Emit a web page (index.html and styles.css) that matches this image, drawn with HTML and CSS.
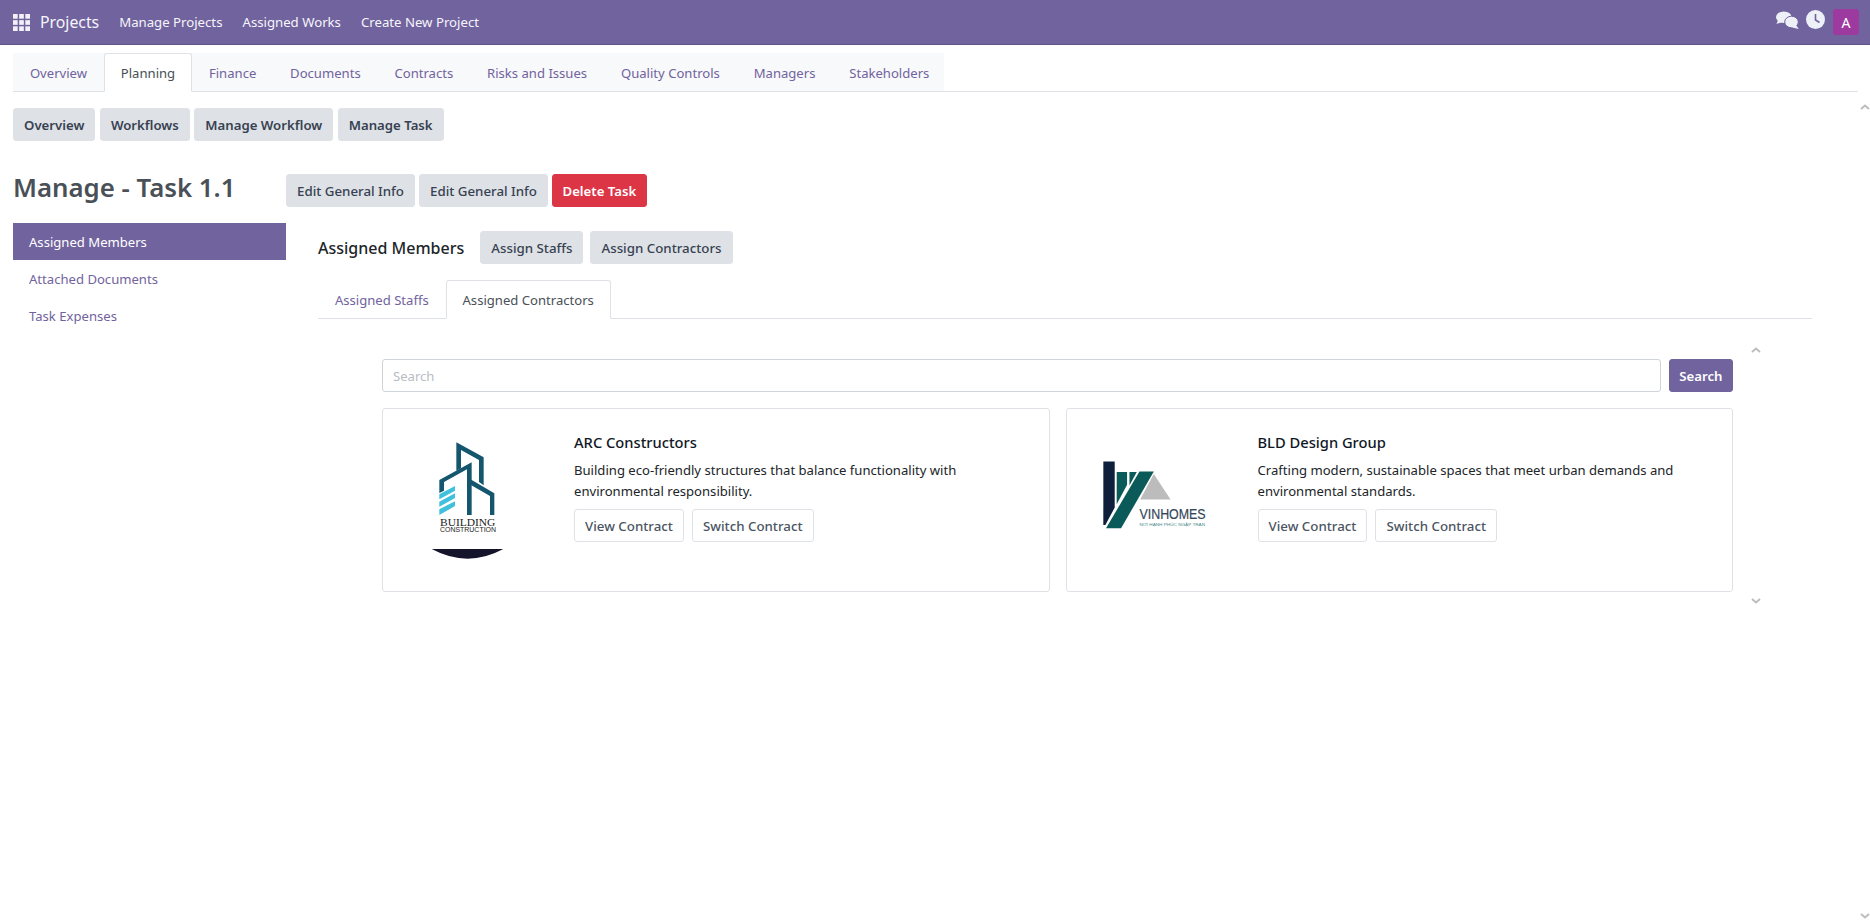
FILE: index.html
```html
<!DOCTYPE html>
<html lang="en">
<head>
    <meta charset="UTF-8">
    <title>Projects - Manage Task</title>
    <link rel="stylesheet" href="styles.css">
</head>
<body>
    <header class="navbar">
        <svg class="apps-icon" width="17" height="17" viewBox="0 0 16 16" fill="#f3f1f7">
            <rect x="0" y="0" width="4.4" height="4.4"/><rect x="5.8" y="0" width="4.4" height="4.4"/><rect x="11.6" y="0" width="4.4" height="4.4"/>
            <rect x="0" y="5.8" width="4.4" height="4.4"/><rect x="5.8" y="5.8" width="4.4" height="4.4"/><rect x="11.6" y="5.8" width="4.4" height="4.4"/>
            <rect x="0" y="11.6" width="4.4" height="4.4"/><rect x="5.8" y="11.6" width="4.4" height="4.4"/><rect x="11.6" y="11.6" width="4.4" height="4.4"/>
        </svg>
        <span class="brand">Projects</span>
        <nav class="nav-links">
            <a>Manage Projects</a>
            <a>Assigned Works</a>
            <a>Create New Project</a>
        </nav>
        <div class="nav-right">
            <svg class="nav-icon chat-icon" width="23" height="18" viewBox="0 0 23 18" fill="#eef0f7">
                <ellipse cx="7.8" cy="6.2" rx="7.8" ry="5.8"/>
                <path d="M2 9 L0.5 13 L6.5 11 Z"/>
                <ellipse cx="15.5" cy="11" rx="6.8" ry="5.8" stroke="#71639e" stroke-width="1"/>
                <path d="M20 14 L22.8 18 L16 16.5 Z"/>
            </svg>
            <svg class="nav-icon" width="19" height="19" viewBox="0 0 19 19">
                <circle cx="9.5" cy="9.5" r="9.5" fill="#eef0f7"/>
                <path d="M9.5 4 V10 L13.5 12.5" fill="none" stroke="#71639e" stroke-width="1.6"/>
            </svg>
            <span class="avatar">A</span>
        </div>
    </header>

    <div class="page">
        <ul class="tabs top-tabs">
            <li>Overview</li>
            <li class="active">Planning</li>
            <li>Finance</li>
            <li>Documents</li>
            <li>Contracts</li>
            <li>Risks and Issues</li>
            <li>Quality Controls</li>
            <li>Managers</li>
            <li>Stakeholders</li>
        </ul>

        <div class="btn-row sub-nav">
            <button class="btn">Overview</button>
            <button class="btn">Workflows</button>
            <button class="btn">Manage Workflow</button>
            <button class="btn">Manage Task</button>
        </div>

        <div class="title-row">
            <h1>Manage - Task 1.1</h1>
            <div class="btn-row">
                <button class="btn">Edit General Info</button>
                <button class="btn">Edit General Info</button>
                <button class="btn btn-danger">Delete Task</button>
            </div>
        </div>

        <div class="columns">
            <aside class="side-menu">
                <a class="active">Assigned Members</a>
                <a>Attached Documents</a>
                <a>Task Expenses</a>
            </aside>

            <main class="content">
                <div class="section-head">
                    <h2>Assigned Members</h2>
                    <button class="btn">Assign Staffs</button>
                    <button class="btn">Assign Contractors</button>
                </div>

                <ul class="tabs inner-tabs">
                    <li>Assigned Staffs</li>
                    <li class="active">Assigned Contractors</li>
                </ul>

                <div class="scroll-area">
                    <div class="search-row">
                        <input class="search-input" type="text" placeholder="Search">
                        <button class="btn btn-primary">Search</button>
                    </div>

                    <div class="cards">
                        <div class="card">
                            <div class="card-logo">
                                <svg width="80" height="120" viewBox="150 120 240 360">
                                    <path fill="#14566e" d="M226 127 L308 172 V256 L294 246 V180 L240 150 V205 L226 212 Z"/>
                                    <path fill="#14566e" d="M175 240 L272 187 V345 H258 V208 L189 246 V272 L175 279 Z"/>
                                    <path fill="#14566e" d="M258 232 L340 280 V345 H327 V288 L258 248 Z"/>
                                    <path fill="#3fc0dc" d="M175 283 L222 258 V272 L175 298 Z"/>
                                    <path fill="#3fc0dc" d="M175 305 L222 280 V294 L175 320 Z"/>
                                    <path fill="#3fc0dc" d="M175 328 L222 304 V318 L175 345 Z"/>
                                    <text class="logo-serif" x="177" y="377" textLength="166" lengthAdjust="spacingAndGlyphs">BUILDING</text>
                                    <text class="logo-sans" x="177" y="396" textLength="168" lengthAdjust="spacingAndGlyphs">CONSTRUCTION</text>
                                    <path fill="#14142b" d="M152 447 H367 Q260 505 152 447 Z"/>
                                </svg>
                            </div>
                            <div class="card-body">
                                <h3>ARC Constructors</h3>
                                <p>Building eco-friendly structures that balance functionality with environmental responsibility.</p>
                                <div class="btn-row wide">
                                    <button class="btn btn-outline">View Contract</button>
                                    <button class="btn btn-outline">Switch Contract</button>
                                </div>
                            </div>
                        </div>

                        <div class="card">
                            <div class="card-logo">
                                <svg class="vin-logo" width="107" height="72" viewBox="90 175 320 215">
                                    <path fill="#0d1f3a" d="M97 182 H131 V320 L103 372 H97 Z"/>
                                    <path fill="#0b5a5a" d="M137 214 H168 V252 L137 310 Z"/>
                                    <path fill="#0b5a5a" d="M175 214 H197 L175 254 Z"/>
                                    <path fill="#0b5a5a" d="M205 212 H248 L150 382 H105 Z"/>
                                    <path fill="#bcbcbc" d="M248 220 L298 296 H207 Z"/>
                                    <text class="logo-vin" x="205" y="354" textLength="198" lengthAdjust="spacingAndGlyphs">VINHOMES</text>
                                    <text class="logo-vin-sub" x="205" y="376" textLength="196" lengthAdjust="spacingAndGlyphs">NƠI HẠNH PHÚC NGẬP TRÀN</text>
                                </svg>
                            </div>
                            <div class="card-body">
                                <h3>BLD Design Group</h3>
                                <p>Crafting modern, sustainable spaces that meet urban demands and environmental standards.</p>
                                <div class="btn-row wide">
                                    <button class="btn btn-outline">View Contract</button>
                                    <button class="btn btn-outline">Switch Contract</button>
                                </div>
                            </div>
                        </div>
                    </div>

                    <svg class="chevron inner-up" width="10" height="6" viewBox="0 0 10 6"><path d="M1 5 L5 1.5 L9 5"/></svg>
                    <svg class="chevron inner-down" width="10" height="6" viewBox="0 0 10 6"><path d="M1 1 L5 4.5 L9 1"/></svg>
                </div>
            </main>
        </div>
    </div>

    <svg class="chevron page-up" width="10" height="6" viewBox="0 0 10 6"><path d="M1 5 L5 1.5 L9 5"/></svg>
    <svg class="chevron page-down" width="10" height="6" viewBox="0 0 10 6"><path d="M1 1 L5 4.5 L9 1"/></svg>
</body>
</html>
```

FILE: styles.css
```css
* {
    box-sizing: border-box;
}

body {
    font-family: 'Noto Sans', 'Open Sans', sans-serif;
    font-size: 13.1px;
    color: #212529;
    background: #ffffff;
    margin: 0;
    height: 921px;
    overflow: hidden;
    position: relative;
}

/* top bar */
.navbar {
    display: flex;
    align-items: center;
    height: 45px;
    padding: 0 11px 0 13px;
    background: #71639e;
    border-bottom: 1px solid #5f5388;
    color: #f6f5fa;
}

.apps-icon {
    margin-right: 10px;
}

.brand {
    font-size: 15.8px;
    margin-right: 20px;
}

.nav-links {
    display: flex;
    gap: 20px;
    font-size: 13.2px;
}

.nav-right {
    margin-left: auto;
    display: flex;
    align-items: center;
    gap: 8px;
}

.nav-icon {
    margin-bottom: 5px;
}

.chat-icon {
    margin-right: -1px;
}

.avatar {
    width: 26px;
    height: 26px;
    border-radius: 3px;
    background: #9c3aa0;
    color: #fff;
    display: flex;
    align-items: center;
    justify-content: center;
    font-size: 14px;
}

.page {
    padding: 8px 12px 0 13px;
}

/* tabs */
.tabs {
    list-style: none;
    display: flex;
    margin: 0;
    padding: 0;
    border-bottom: 1px solid #dee2e6;
}

.tabs li {
    padding: 9px 15.9px 7px;
    line-height: 21px;
    color: #71639e;
    border: 1px solid transparent;
    border-bottom: none;
    margin-bottom: -1px;
}

.tabs li.active {
    background: #fff;
    color: #495057;
    border-color: #dee2e6;
    border-bottom: 1px solid #fff;
    border-radius: 3px 3px 0 0;
}

.top-tabs {
    background: linear-gradient(to right, #f8f9fa 931px, transparent 931px);
}

.inner-tabs {
    margin-top: 16px;
}

/* buttons */
.btn-row {
    display: flex;
    gap: 4px;
}

.btn-row.wide {
    gap: 8px;
}

.sub-nav {
    margin-top: 16px;
    gap: 4.5px;
}

.sub-nav .btn {
    font-weight: 600;
    font-size: 13.2px;
}

.btn {
    font: 500 13.3px 'Noto Sans', 'Open Sans', sans-serif;
    height: 33px;
    padding: 0 10px;
    border: 1px solid #dee2e6;
    border-radius: 3px;
    background: #dee2e6;
    color: #374151;
    white-space: nowrap;
}

.btn-danger {
    background: #dc3545;
    border-color: #dc3545;
    color: #fff;
    font-weight: 600;
    font-size: 13.2px;
    padding: 0 9.5px;
}

.btn-primary {
    background: #71639e;
    border-color: #71639e;
    color: #fff;
    font-weight: 600;
    font-size: 13.2px;
    padding: 0 9.5px;
}

.btn-outline {
    background: #fff;
    color: #4b5563;
}

/* heading row */
.title-row {
    display: flex;
    align-items: center;
    margin-top: 33px;
}

h1 {
    width: 273px;
    margin: 0;
    padding-bottom: 6px;
    font-size: 25.8px;
    font-weight: 600;
    color: #495057;
    line-height: 27px;
    white-space: nowrap;
}

.columns {
    display: flex;
    margin-top: 16px;
}

.side-menu {
    width: 273px;
    flex-shrink: 0;
}

.side-menu a {
    display: block;
    height: 37px;
    line-height: 38px;
    padding-left: 16px;
    color: #71639e;
}

.side-menu a.active {
    background: #71639e;
    color: #fff;
}

.content {
    width: 1494px;
    margin-left: 32px;
}

.section-head {
    display: flex;
    align-items: center;
    gap: 7px;
    margin-top: 8px;
}

h2 {
    margin: 0 9px 0 0;
    font-size: 16px;
    font-weight: 500;
    color: #212529;
}

/* contractors */
.scroll-area {
    position: relative;
    padding: 40px 79px 0 64px;
}

.search-row {
    display: flex;
    gap: 8px;
}

.search-input {
    flex: 1;
    height: 33px;
    padding: 0 10px;
    font: 13.1px 'Noto Sans', 'Open Sans', sans-serif;
    border: 1px solid #ced4da;
    border-radius: 3px;
}

.search-input::placeholder {
    color: #b8bcc4;
}

.cards {
    display: flex;
    gap: 16px;
    margin-top: 16px;
}

.card {
    flex: 1;
    height: 184px;
    display: flex;
    border: 1px solid #dee2e6;
    border-radius: 3px;
}

.card-logo {
    width: 176px;
    flex-shrink: 0;
    display: flex;
    align-items: center;
    justify-content: center;
}

.vin-logo {
    margin-bottom: 10px;
}

.card-body {
    padding: 23px 16px 0 15px;
}

h3 {
    margin: 0 0 8px;
    font-size: 14.7px;
    font-weight: 500;
    line-height: 20px;
    color: #111827;
}

.card-body p {
    margin: 0 0 7px;
    line-height: 21px;
}

/* logo text */
.logo-serif {
    font-family: 'Liberation Serif', serif;
    font-size: 29px;
    fill: #222;
}

.logo-sans {
    font-family: 'Liberation Sans', sans-serif;
    font-size: 21px;
    fill: #222;
}

.logo-vin {
    font-family: 'Liberation Sans', sans-serif;
    font-size: 44px;
    fill: #33475b;
    stroke: #33475b;
    stroke-width: 0.6px;
}

.logo-vin-sub {
    font-family: 'Liberation Sans', sans-serif;
    font-size: 13px;
    fill: #4a8a8c;
}

/* scroll arrows */
.chevron {
    position: absolute;
}

.chevron path {
    fill: none;
    stroke: #bdbdbd;
    stroke-width: 2;
}

.inner-up {
    top: 28px;
    right: 51px;
}

.inner-down {
    top: 279px;
    right: 51px;
}

.page-up {
    top: 104px;
    right: 0;
}

.page-down {
    top: 913px;
    right: 0;
}
```
